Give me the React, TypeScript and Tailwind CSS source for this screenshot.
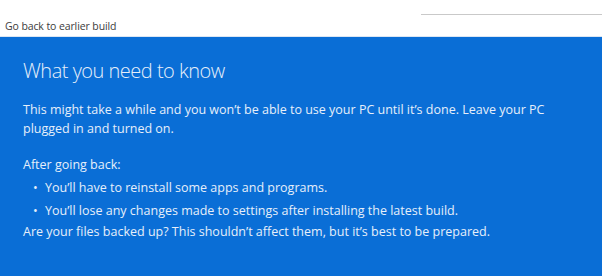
import React from 'react';

const App: React.FC = () => {
  return (
    <div
      className="w-[602px] h-[276px] overflow-hidden bg-white flex flex-col"
      style={{ fontFamily: '"Open Sans", "Noto Sans", sans-serif' }}
    >
      {/* top strip */}
      <div className="relative h-[37px] shrink-0 bg-white border-b border-[#dbe6f3]">
        <div className="absolute left-[421px] right-0 top-[14px] h-px bg-[#c9c9c9]" />
        <div className="absolute left-[5px] top-[18px] text-[10.5px] leading-[16px] text-[#3c3c3c] tracking-[-0.1px]">
          Go back to earlier build
        </div>
      </div>

      {/* blue panel */}
      <div className="flex-1 bg-[#0a6ed6] text-[#e6effa] pl-[23px] pt-[20px]">
        <h1 className="text-[20px] leading-[28px] font-light tracking-[-0.5px]">
          What you need to know
        </h1>
        <p className="mt-[15px] text-[12.5px] leading-[19px] w-[545px]">
          This might take a while and you won’t be able to use your PC until it’s done. Leave your PC
          plugged in and turned on.
        </p>
        <p className="mt-[17px] text-[12.5px] leading-[19px]">After going back:</p>
        <ul className="mt-[2px] text-[12.5px] leading-[23px]">
          <li className="flex">
            <span className="w-[22px] pl-[10px]">•</span>
            <span>You’ll have to reinstall some apps and programs.</span>
          </li>
          <li className="flex">
            <span className="w-[22px] pl-[10px]">•</span>
            <span>You’ll lose any changes made to settings after installing the latest build.</span>
          </li>
        </ul>
        <p className="text-[12.5px] leading-[20px]">
          Are your files backed up? This shouldn’t affect them, but it’s best to be prepared.
        </p>
      </div>
    </div>
  );
};

export default App;
